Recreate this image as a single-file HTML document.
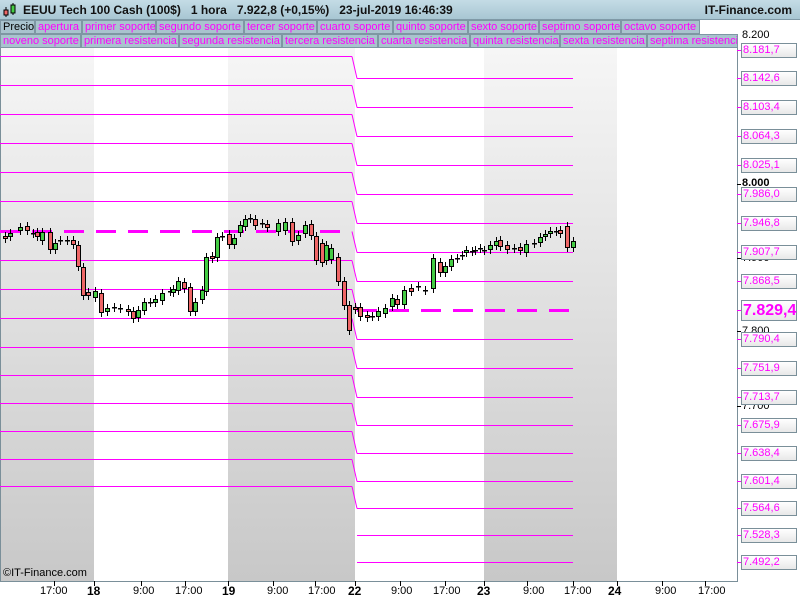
<!DOCTYPE html>
<html><head><meta charset="utf-8"><style>
*{margin:0;padding:0;box-sizing:border-box}
body{width:800px;height:600px;overflow:hidden;background:#fff;font-family:"Liberation Sans",sans-serif;position:relative}
#title{position:absolute;left:0;top:0;width:800px;height:20px;background:linear-gradient(#c4dce6,#a8c6d3);border-bottom:1px solid #7f99a6;font-size:12px;font-weight:bold;color:#111}
.row{position:absolute;left:0;height:14px}
.b{position:absolute;top:0;height:14px;background:#a9c3ce;border:1px solid #7e97a3;color:#f0f;font-size:11px;line-height:12px;padding-left:2px;white-space:nowrap;overflow:hidden}
.lab{position:absolute;left:741px;width:56px;height:15px;border:1px solid #7a8f99;background:linear-gradient(#fff,#e8e8e8);color:#f0f;font-size:11px;line-height:13px;padding-left:1px}
.blk{position:absolute;left:742px;font-size:11px;color:#000}
.t{position:absolute;top:585px;font-size:11px;color:#000}
.tb{font-weight:bold;font-size:12px}
</style></head><body>
<div id="title">
<svg style="position:absolute;left:2px;top:2px" width="16" height="16"><line x1="4" y1="5" x2="4" y2="15" stroke="#000"/><rect x="2" y="8" width="4" height="5" fill="#e66" stroke="#000"/><line x1="11" y1="1" x2="11" y2="13" stroke="#000"/><rect x="9" y="3" width="4" height="8" fill="#4c4" stroke="#000"/></svg>
<span style="position:absolute;left:23px;top:3px">EEUU Tech 100 Cash (100$)&nbsp;&nbsp;&nbsp;1 hora&nbsp;&nbsp;&nbsp;7.922,8 (+0,15%)&nbsp;&nbsp;&nbsp;23-jul-2019 16:46:39</span>
<span style="position:absolute;right:8px;top:3px">IT-Finance.com</span>
</div>
<div class="row" style="top:20px">
<div class="b" style="left:0;width:35px;color:#000">Precio</div>
<div class="b" style="left:35px;width:47px">apertura</div>
<div class="b" style="left:82px;width:74px">primer soporte</div>
<div class="b" style="left:156px;width:88px">segundo soporte</div>
<div class="b" style="left:244px;width:73px">tercer soporte</div>
<div class="b" style="left:317px;width:76px">cuarto soporte</div>
<div class="b" style="left:393px;width:75px">quinto soporte</div>
<div class="b" style="left:468px;width:71px">sexto soporte</div>
<div class="b" style="left:539px;width:82px">septimo soporte</div>
<div class="b" style="left:621px;width:79px">octavo soporte</div>
</div>
<div class="row" style="top:34px">
<div class="b" style="left:0;width:81px">noveno soporte</div>
<div class="b" style="left:81px;width:98px">primera resistencia</div>
<div class="b" style="left:179px;width:103px">segunda resistencia</div>
<div class="b" style="left:282px;width:96px">tercera resistencia</div>
<div class="b" style="left:378px;width:92px">cuarta resistencia</div>
<div class="b" style="left:470px;width:90px">quinta resistencia</div>
<div class="b" style="left:560px;width:87px">sexta resistencia</div>
<div class="b" style="left:647px;width:91px">septima resistencia</div>
</div>
<svg id="ch" style="position:absolute;left:0;top:48px" width="800" height="552">
<defs><linearGradient id="g" x1="0" y1="0" x2="0" y2="1"><stop offset="0" stop-color="#f6f6f6"/><stop offset="1" stop-color="#c8c8c8"/></linearGradient></defs>
<rect x="0" y="0" width="94" height="533" fill="url(#g)"/>
<rect x="228" y="0" width="127" height="533" fill="url(#g)"/>
<rect x="484" y="0" width="133" height="533" fill="url(#g)"/>
<line x1="737.5" y1="0" x2="737.5" y2="533" stroke="#7a8f99"/>
<line x1="0" y1="533.5" x2="738" y2="533.5" stroke="#7a8f99"/>
<line x1="0.5" y1="0" x2="0.5" y2="533" stroke="#7a8f99"/>
<g id="tk" stroke="#000"></g>
<g id="lv"></g><g id="cd"></g>
</svg>
<div class="blk" style="top:29px">8.200</div>
<div class="blk" style="top:177px;font-weight:bold">8.000</div>
<div class="blk" style="top:252px">7.900</div>
<div class="blk" style="top:325px">7.800</div>
<div class="blk" style="top:400px">7.700</div>
<div id="labs"></div>
<div style="position:absolute;left:3px;top:567px;font-size:11px">©IT-Finance.com</div>
<div class="t" style="left:40px">17:00</div><div class="t tb" style="left:87px;top:584px">18</div>
<div class="t" style="left:133px">9:00</div><div class="t" style="left:175px">17:00</div>
<div class="t tb" style="left:222px;top:584px">19</div><div class="t" style="left:267px">9:00</div>
<div class="t" style="left:308px">17:00</div><div class="t tb" style="left:348px;top:584px">22</div>
<div class="t" style="left:391px">9:00</div><div class="t" style="left:433px">17:00</div>
<div class="t tb" style="left:477px;top:584px">23</div><div class="t" style="left:523px">9:00</div>
<div class="t" style="left:564px">17:00</div><div class="t tb" style="left:608px;top:584px">24</div>
<div class="t" style="left:655px">9:00</div><div class="t" style="left:698px">17:00</div>
<script>
var ns="http://www.w3.org/2000/svg",O=48;
function el(p,t,a){var e=document.createElementNS(ns,t);for(var k in a)e.setAttribute(k,a[k]);p.appendChild(e);return e}
var lv=document.getElementById('lv'),cd=document.getElementById('cd'),tk=document.getElementById('tk');
[54,94,141,185,228,273,315,355,400,445,484,527,573,617,662,705].forEach(function(x){el(tk,'line',{x1:x+.5,y1:533,x2:x+.5,y2:538});});
var L=[56,85,114,143,172,201,231,260,289,318,347,375,403,431,459,486];
var R=[50,78,107,136,165,194,223,252,281,310,339,368,397,425,453,481,508,535,562];
R.forEach(function(y){el(tk,'line',{x1:737,y1:y-O+.5,x2:741,y2:y-O+.5,stroke:'#f0f'});});
[36,184,258,331,406].forEach(function(y){el(tk,'line',{x1:737,y1:y-O+.5,x2:741,y2:y-O+.5});});
L.forEach(function(y,i){var d=(y==231);el(lv,'line',{x1:0,y1:y-O+.5,x2:352,y2:y-O+.5,stroke:'#f0f','stroke-width':d?3:1,'stroke-dasharray':d?'20 12':''});
var yr=R[i+1];el(lv,'line',{x1:352,y1:y-O+.5,x2:357,y2:yr-O+.5,stroke:'#f0f','stroke-width':1});});
R.forEach(function(y,i){if(i==0)return;var d=(y==310);el(lv,'line',{x1:357,y1:y-O+.5,x2:573,y2:y-O+.5,stroke:'#f0f','stroke-width':d?3:1,'stroke-dasharray':d?'20 12':''});});
var C=[[5,236,238],[10,236,233],[20,230,227],[27,226,230],[33,233,233],[37,232,236],[42,240,232],[50,232,249],[55,249,243],[60,240,240],[67,240,240],[73,240,244],[78,245,266],[83,267,295],[88,292,295],[95,297,291],[101,293,312],[107,311,308],[114,307,307],[120,308,308],[128,309,311],[133,311,318],[138,317,310],[144,310,302],[150,302,302],[155,302,299],[162,300,293],[170,291,291],[173,292,289],[178,290,281],[184,282,288],[190,287,311],[195,311,302],[202,299,290],[206,291,257],[212,256,258],[217,257,237],[222,236,236],[229,234,244],[234,244,238],[240,232,225],[245,226,219],[250,218,218],[255,219,225],[262,223,223],[267,224,227],[278,231,223],[285,230,222],[292,222,241],[298,240,235],[305,233,225],[311,224,235],[316,236,260],[322,243,262],[326,260,245],[331,259,248],[338,257,281],[344,281,305],[349,305,330],[355,307,309],[360,307,316],[367,315,317],[372,316,316],[378,316,311],[385,313,308],[392,306,298],[397,299,304],[404,304,290],[411,288,291],[418,286,286],[425,290,290],[433,288,258],[440,262,272],[445,272,266],[451,266,259],[457,258,258],[462,255,255],[466,252,250],[472,251,251],[475,250,250],[480,248,248],[484,250,250],[490,249,245],[496,245,241],[500,240,246],[507,245,249],[514,248,248],[520,247,250],[526,252,244],[534,243,243],[540,242,237],[545,236,234],[550,233,231],[556,231,231],[560,230,233],[567,226,247],[573,247,241]];
C.forEach(function(c){var x=c[0],o=c[1]-O,cl=c[2]-O,t=Math.min(o,cl),b=Math.max(o,cl);
el(cd,'line',{x1:x+.5,y1:t-4,x2:x+.5,y2:b+5,stroke:'#000'});
if(b-t<1){el(cd,'rect',{x:x-2,y:t,width:5,height:1.5,fill:'#000'});}
else el(cd,'rect',{x:x-2+.5,y:t+.5,width:4,height:b-t,fill:cl<o?'#4c4':'#e66',stroke:'#000'});});
var V=['8.181,7','8.142,6','8.103,4','8.064,3','8.025,1','7.986,0','7.946,8','7.907,7','7.868,5','7.829,4','7.790,4','7.751,9','7.713,7','7.675,9','7.638,4','7.601,4','7.564,6','7.528,3','7.492,2'];
var h='';V.forEach(function(v,i){var y=R[i];if(i==9)h+='<div class="lab" style="top:'+(y-10)+'px;height:21px;font-size:16px;font-weight:bold;line-height:19px">'+v+'</div>';else h+='<div class="lab" style="top:'+(y-7)+'px">'+v+'</div>';});
document.getElementById('labs').innerHTML=h;
</script>
</body></html>
